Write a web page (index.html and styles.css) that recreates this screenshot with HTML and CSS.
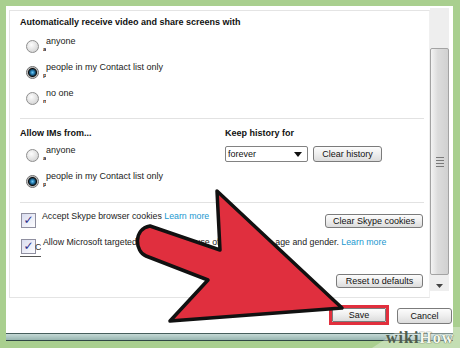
FILE: index.html
```html
<!DOCTYPE html>
<html lang="en">
<head>
    <meta charset="UTF-8">
    <meta name="viewport" content="width=device-width, initial-scale=1.0">
    <title>Skype privacy settings</title>
    <link rel="stylesheet" href="styles.css">
</head>
<body>
    <div class="dialog">
        <div class="main">
            <div class="panel">
                <h2 class="heading">Automatically receive video and share screens with</h2>
                <div class="options">
                    <div class="option"><span class="radio"></span><span class="ghost">a</span><span class="option-label">anyone</span></div>
                    <div class="option"><span class="radio checked"></span><span class="ghost">p</span><span class="option-label">people in my Contact list only</span></div>
                    <div class="option"><span class="radio"></span><span class="ghost">n</span><span class="option-label">no one</span></div>
                </div>

                <hr class="divider">

                <div class="columns">
                    <div class="column">
                        <h2 class="heading">Allow IMs from...</h2>
                        <div class="options">
                            <div class="option"><span class="radio"></span><span class="ghost">a</span><span class="option-label">anyone</span></div>
                            <div class="option"><span class="radio checked"></span><span class="ghost">p</span><span class="option-label">people in my Contact list only</span></div>
                        </div>
                    </div>
                    <div class="column">
                        <h2 class="heading">Keep history for</h2>
                        <div class="history">
                            <div class="select">
                                <span>forever</span>
                                <svg width="8" height="5" viewBox="0 0 8 5"><polygon points="0,0 8,0 4,5" fill="#111"/></svg>
                            </div>
                            <button class="btn history-btn">Clear history</button>
                        </div>
                    </div>
                </div>

                <hr class="divider divider-low">

                <div class="check-row">
                    <span class="checkbox">✓</span>
                    <span class="check-label">Accept Skype browser cookies <span class="link">Learn more</span></span>
                    <button class="btn cookies-btn">Clear Skype cookies</button>
                </div>
                <div class="check-row check-row-ads">
                    <span class="check-wrap"><span class="checkbox">✓</span><span class="ghost-c">C</span></span>
                    <span class="check-label">Allow Microsoft targeted ads, including use of Skype profile age and gender. <span class="link">Learn more</span></span>
                </div>
                <div class="reset-row">
                    <button class="btn reset-btn">Reset to defaults</button>
                </div>
            </div>

            <div class="scrollbar">
                <div class="thumb"><span class="grip"></span></div>
                <svg class="scroll-down" width="7" height="4" viewBox="0 0 7 4"><polygon points="0,0 7,0 3.5,4" fill="#444"/></svg>
            </div>
        </div>

        <div class="actions">
            <div class="save-frame"><button class="btn save-btn">Save</button></div>
            <button class="btn cancel-btn">Cancel</button>
        </div>
        <div class="frame-bottom"></div>
    </div>

    <!-- overlay: pointer arrow and watermark band -->
    <svg class="overlay" width="460" height="348" viewBox="0 0 460 348">
        <polygon points="372,348 404,327 460,327 460,348" fill="#ffffff" fill-opacity="0.32"/>
        <path d="M217,191 L342,308 L170,321 L208,280 L146,256 C135,252 133,229 150,226 L220,250 Z"
              fill="#e02f3e" stroke="#111" stroke-width="3.5" stroke-linejoin="round"/>
    </svg>
    <div class="watermark"><span class="wm-wiki">wiki</span><span class="wm-how">How</span></div>
</body>
</html>
```

FILE: styles.css
```css
body {
    margin: 0;
    width: 460px;
    height: 348px;
    padding: 6px 0 0 6px;
    box-sizing: border-box;
    position: relative;
    overflow: hidden;
    background: #a9cf8f;
    font-family: "Liberation Sans", Arial, sans-serif;
    color: #222;
}
.dialog {
    width: 447px;
    height: 335px;
    background: #fff;
    display: flex;
    flex-direction: column;
}
.main {
    display: flex;
    height: 292px;
}
.panel {
    box-sizing: border-box;
    width: 421px;
    height: 288px;
    margin: 4px 0 0 3px;
    border: 1px solid #e4e4e4;
    border-right-color: #f0f0f0;
    padding: 6px 6px 0 10px;
}
.heading {
    margin: 0;
    font-size: 9px;
    line-height: 11px;
    font-weight: bold;
    color: #111;
}
.options {
    margin: 12px 0 0 6px;
}
.column .options {
    margin-top: 10px;
}
.option {
    display: flex;
    align-items: center;
    height: 13px;
    font-size: 9px;
    line-height: 11px;
}
.option + .option {
    margin-top: 13px;
}
.option-label {
    padding-bottom: 10px;
}
.ghost {
    font-size: 6px;
    line-height: 6px;
    padding-top: 4px;
    width: 3px;
    margin: 0 0 0 4px;
    overflow: hidden;
    color: #222;
    font-weight: bold;
}
.radio {
    flex: none;
    box-sizing: border-box;
    width: 13px;
    height: 13px;
    border-radius: 50%;
    border: 1px solid #8e8e8e;
    background: radial-gradient(circle at 40% 35%, #fdfdfd, #d2d2d2 85%);
}
.radio.checked {
    border-color: #6d6d6d;
    background: radial-gradient(circle, #74c8f0 0, #2f8cc4 1.6px, #134766 3px, #0b0b0b 4px, #b8b8b8 5px, #efefef 6px);
}
.divider {
    border: 0;
    border-top: 1px solid #e2e2e2;
    height: 0;
    margin: 13px -1px 0 0;
}
.divider-low {
    margin-top: 14px;
}
.columns {
    display: grid;
    grid-template-columns: 205px 1fr;
    margin-top: 9px;
}
.history {
    display: flex;
    margin-top: 7px;
}
.select {
    box-sizing: border-box;
    width: 83px;
    height: 16px;
    border: 1px solid #828282;
    border-radius: 2px;
    background: #fff;
    display: flex;
    align-items: center;
    justify-content: space-between;
    padding: 0 5px 0 2px;
    font-size: 9px;
    line-height: 11px;
    color: #111;
}
.btn {
    box-sizing: border-box;
    height: 15px;
    padding: 0;
    border: 1px solid #7b7b7b;
    border-radius: 3px;
    background: linear-gradient(#fcfcfc, #eeeeee 50%, #dcdcdc);
    font-family: "Liberation Sans", Arial, sans-serif;
    font-size: 9px;
    line-height: 12px;
    color: #111;
    text-align: center;
}
.history-btn {
    width: 69px;
    height: 16px;
    margin-left: 5px;
}
.check-row {
    display: flex;
    align-items: flex-start;
    margin-top: 10px;
}
.check-row-ads {
    margin-top: 11px;
}
.checkbox {
    flex: none;
    box-sizing: border-box;
    width: 15px;
    height: 15px;
    margin-left: 1px;
    border: 1px solid #8f8fa0;
    background: linear-gradient(135deg, #d9dcef, #fdfdff);
    color: #2d2f8c;
    font: bold 12px/13px "DejaVu Sans", sans-serif;
    text-align: center;
}
.check-wrap {
    display: flex;
    flex: none;
    padding-bottom: 2px;
    border-bottom: 1px solid #555;
}
.ghost-c {
    font-size: 9px;
    line-height: 11px;
    margin: 3px 0 0 -1px;
    width: 6px;
    overflow: hidden;
    color: #333;
}
.check-label {
    margin: -2px 0 0 6px;
    font-size: 8.8px;
    line-height: 11px;
    white-space: nowrap;
}
.check-row-ads .check-label {
    margin-left: 2px;
}
.link {
    color: #1a98cf;
}
.cookies-btn {
    width: 98px;
    height: 14px;
    margin: 1px 0 0 auto;
}
.reset-row {
    display: flex;
    justify-content: flex-end;
    margin-top: 17px;
}
.reset-btn {
    width: 87px;
    height: 14px;
}
.scrollbar {
    width: 19px;
    height: 283px;
    margin-top: 2px;
    background: #eeeeee;
    display: flex;
    flex-direction: column;
    align-items: center;
}
.thumb {
    box-sizing: border-box;
    width: 19px;
    height: 227px;
    margin-top: 40px;
    border: 1px solid #a3a3a3;
    border-radius: 2px;
    background: linear-gradient(to right, #f4f4f4, #dcdcdc 40%, #d1d1d1);
    display: flex;
    align-items: center;
    justify-content: center;
}
.grip {
    width: 8px;
    height: 10px;
    background: repeating-linear-gradient(#7a7a7a 0 1px, transparent 1px 3px);
}
.scroll-down {
    margin-top: 9px;
}
.actions {
    display: flex;
    justify-content: flex-end;
    align-items: flex-start;
    margin-top: 7px;
    padding-right: 1px;
}
.save-frame {
    box-sizing: border-box;
    width: 60px;
    height: 20px;
    border: 3px solid #e12f3d;
}
.save-btn {
    width: 54px;
    height: 14px;
    border-radius: 1px;
    display: block;
}
.cancel-btn {
    width: 55px;
    height: 16px;
    margin: 3px 0 0 8px;
}
.frame-bottom {
    margin-top: auto;
    height: 8px;
    box-sizing: border-box;
    border-top: 1px solid #465f5c;
    border-bottom: 1px solid #2f4744;
    background: linear-gradient(#c4d9d5, #98b6b1);
}
.overlay {
    position: absolute;
    left: 0;
    top: 0;
}
.watermark {
    position: absolute;
    left: 386px;
    top: 330px;
    font: bold 16px/16px "Liberation Serif", serif;
    letter-spacing: 1px;
}
.wm-wiki {
    color: #4e5c4a;
}
.wm-how {
    color: #f4f8ee;
    text-shadow: 0 0 1px #55664c, 0 0 1px #55664c;
}
```
